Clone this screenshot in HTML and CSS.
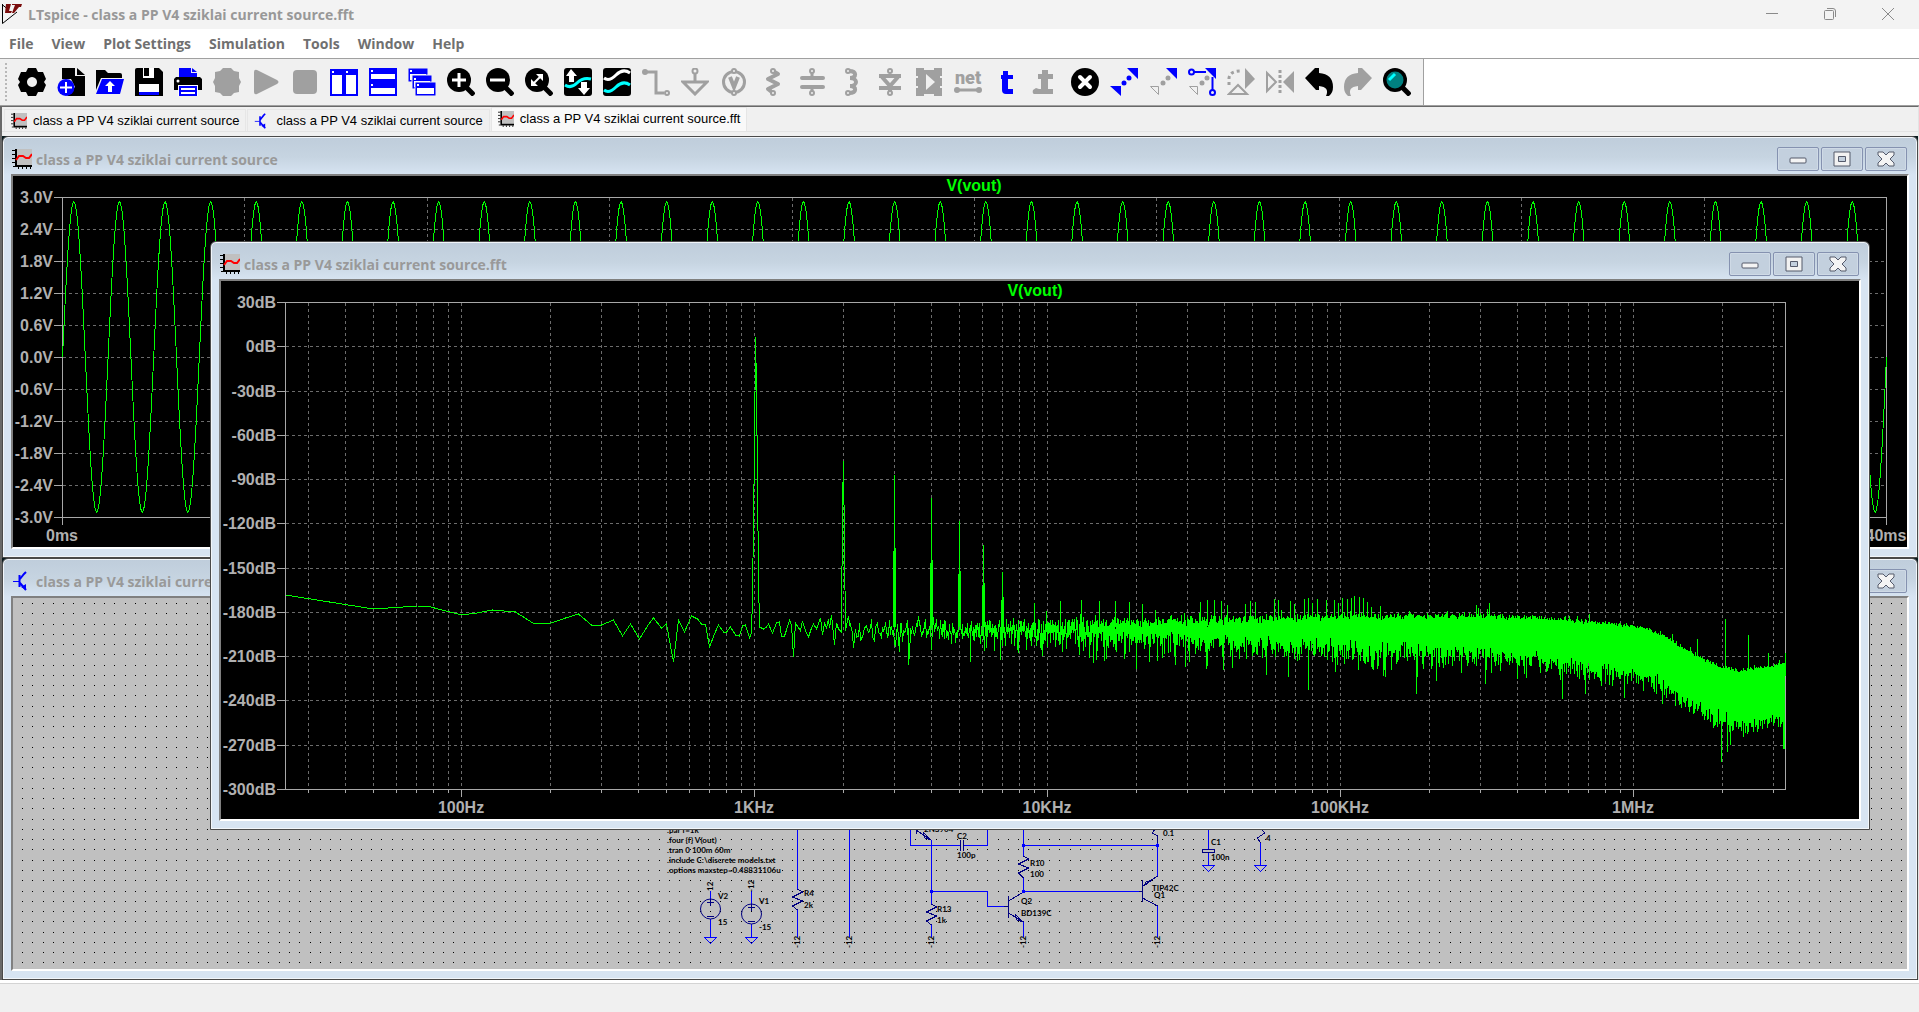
FILE: index.html
```html
<!DOCTYPE html>
<html lang="en">
<head>
<meta charset="utf-8">
<title>LTspice - class a PP V4 sziklai current source.fft</title>
<link rel="stylesheet" href="styles.css">
</head>
<body>
<svg class="defs" aria-hidden="true">
  <symbol id="plot-icon" viewBox="0 0 20 20"><path fill="#c0c0c0" d="M4 0h16v16H4z"/><path stroke="#000" stroke-width="2" fill="none" d="M4 0v17M3 17h17"/><path stroke="#000" fill="none" d="M0 1.500h3M0 5.500h3M0 9.500h3M0 13.500h3M6.500 18v2M10.500 18v2M14.500 18v2M18.500 18v2M1 17.500h2"/><path stroke="#f00" stroke-width="2" fill="none" d="M4 11l3-4h4l3 2h3l3-4"/></symbol>
  <symbol id="bjt-icon" viewBox="0 0 20 20"><path stroke="#00f" stroke-width="2" fill="none" d="M7.500 4v12M8 8l4-5 2-2M8 12l6 7"/><path stroke="#00f" fill="none" d="M1 10.500h6"/><path fill="#00f" d="M14 13v6l-5-3z"/></symbol>
  <symbol id="min-glyph" viewBox="0 0 18 16"><rect x="1" y="7" width="16" height="5" rx="1" fill="#f4f4f4" stroke="#555a6b"/></symbol>
  <symbol id="max-glyph" viewBox="0 0 18 16"><path fill="#f2f2f2" fill-rule="evenodd" stroke="#555a6b" d="M1 1h16v14H1zM5.500 5.500h7v5h-7z"/></symbol>
  <symbol id="close-glyph" viewBox="0 0 18 16"><path fill="#f4f4f4" stroke="#555a6b" stroke-linejoin="round" d="M1 1h5l3 3 3-3h5v3l-4 4 4 4v3h-5l-3-3-3 3H1v-3l4-4-4-4z"/></symbol>
</svg>

<header class="titlebar">
  <svg class="logo" viewBox="0 0 20 20"><path fill="none" stroke="#000" d="M.5 0v19.500L15 8M0 .5l5 4"/><path fill="#7a0c0c" d="M4 0h5L7 7h3L9 9H3zM10 0h10l-1 3h-2l-5 6h-2l3-8h-3z"/></svg>
  <h1 class="app-title">LTspice - class a PP V4 sziklai current source.fft</h1>
  <div class="sys-buttons">
    <button aria-label="Minimize"><svg viewBox="0 0 14 14"><path d="M1 6.500h12"/></svg></button>
    <button aria-label="Restore"><svg viewBox="0 0 14 14"><rect x="1.500" y="3.500" width="9" height="9" rx="1"/><path d="M4 1.500h6q2.500 0 2.500 2.500v6"/></svg></button>
    <button aria-label="Close"><svg viewBox="0 0 14 14"><path d="M1 1l12 12M13 1L1 13"/></svg></button>
  </div>
</header>

<nav class="menubar">
  <button>File</button><button>View</button><button>Plot Settings</button><button>Simulation</button><button>Tools</button><button>Window</button><button>Help</button>
</nav>

<div class="toolbar-row">
<div class="toolbar" role="toolbar" aria-label="Main">
  <span class="grip"></span>
  <button aria-label="Settings"><svg viewBox="0 0 28 28"><path fill-rule="evenodd" d="M10 0h8l2 4h5l3 7-2 3 2 3-3 7h-5l-2 4h-8l-2-4H3l-3-7 2-3-2-3 3-7h5zM14 9a5 5 0 1 0 .01 0z"/></svg></button>
  <button aria-label="New schematic"><svg viewBox="0 0 28 28"><path d="M5 0h13v8h10v20H10l8-9-4-8H5z"/><path d="M20 0l8 7h-8z"/><circle cx="9" cy="19.500" r="8.500" fill="#00f"/><path stroke="#fff" stroke-width="2" d="M3 19.500h12M9 14v11"/></svg></button>
  <button aria-label="Open"><svg viewBox="0 0 28 28"><path d="M0 2h9l3 3h12q2 0 2 2v3H5L0 22z"/><path fill="#00f" d="M6 11h22l-4 15H0z"/><path fill="#fff" d="M14 13l5 5h-3v6h-4v-6H9z"/></svg></button>
  <button aria-label="Save"><svg viewBox="0 0 28 28"><path d="M0 2q0-2 2-2h22l4 4v24H0z"/><path fill="#fff" d="M8 0h11v10H8zM4 16h20v8H4z"/><path d="M9 0h5v8H9z"/><path fill="#00f" d="M4 24h20v3H4z"/></svg></button>
  <button aria-label="Print"><svg viewBox="0 0 28 28"><path fill="#00f" d="M5 0h12v5h6v5H5zM18 0l5 4h-5z"/><path d="M2 9h24l2 2v11H0V11z"/><circle cx="4" cy="13" r="1.500" fill="#fff"/><path fill="#fff" d="M4 17h20v11H4z"/><path fill="#00f" d="M5 18h18v10H5z"/><path stroke="#fff" stroke-width="2" d="M7 21h14M7 25h14"/></svg></button>
  <button disabled aria-label="Halt"><svg viewBox="0 0 28 28"><path d="M10 0h8l3 3 5 1v6l2 4-2 4v6l-5 1-3 3h-8l-3-3-5-1v-6l-2-4 2-4V4l5-1z"/></svg></button>
  <button disabled aria-label="Run"><svg viewBox="0 0 28 28"><path d="M2 4q0-3 3-2l20 10q3 2 0 4L5 26q-3 1-3-2z"/></svg></button>
  <button disabled aria-label="Stop"><svg viewBox="0 0 28 28"><rect x="2" y="2" width="24" height="24" rx="4"/></svg></button>
  <button aria-label="Tile vertically"><svg viewBox="0 0 28 28"><path fill="#00f" d="M0 1h28v27H0z"/><path fill="#fff" d="M2 7h10v19H2zM16 7h10v19H16zM2 3h2v2H2zM16 3h2v2h-2z"/></svg></button>
  <button aria-label="Tile horizontally"><svg viewBox="0 0 28 28"><path fill="#00f" d="M0 0h28v28H0z"/><path fill="#fff" d="M2 6h24v5H2zM2 20h24v6H2zM2 2h2v2H2zM2 16h2v2H2z"/></svg></button>
  <button aria-label="Cascade"><svg viewBox="0 0 28 28"><path fill="#00f" stroke="#f0f0f0" d="M0 0h20v14H0z"/><path fill="#fff" d="M2 6h16v6H2zM2 2h2v2H2z"/><path fill="#00f" stroke="#f0f0f0" d="M4 7h20v14H4z"/><path fill="#fff" d="M6 13h16v6H6zM6 10h2v2H6z"/><path fill="#00f" stroke="#f0f0f0" d="M7 14h21v14H7z"/><path fill="#fff" d="M9 20h17v6H9zM9 16h2v2H9z"/></svg></button>
  <button aria-label="Zoom in"><svg viewBox="0 0 28 28"><circle cx="12" cy="12" r="12"/><path stroke="#000" stroke-width="5" d="M17 17l10 10"/><path stroke="#fff" stroke-width="3" d="M5 12h14M12 5v14"/></svg></button>
  <button aria-label="Zoom out"><svg viewBox="0 0 28 28"><circle cx="12" cy="12" r="12"/><path stroke="#000" stroke-width="5" d="M17 17l10 10"/><path stroke="#fff" stroke-width="3" d="M4 12h15"/></svg></button>
  <button aria-label="Zoom to fit"><svg viewBox="0 0 28 28"><circle cx="12" cy="12" r="12"/><path stroke="#000" stroke-width="5" d="M17 17l10 10"/><path stroke="#fff" stroke-width="2" d="M8 16l8-8"/><path fill="#fff" d="M11 6h7v7zM6 11v7h7z"/></svg></button>
  <button aria-label="Autorange"><svg viewBox="0 0 28 28"><rect width="28" height="28" rx="3"/><path fill="none" stroke="#0ff" stroke-width="3" d="M1 17q6 4 12-2t14-4"/><path fill="#fff" d="M7 1l6 7h-3v6H5V8H2zM20 27l-6-7h3v-6h6v6h3z"/></svg></button>
  <button aria-label="Plot panes"><svg viewBox="0 0 28 28"><rect width="28" height="28" rx="3"/><path fill="none" stroke="#fff" stroke-width="3" d="M1 10q5 4 12-3t14-2"/><path fill="none" stroke="#0ff" stroke-width="3" d="M1 22q5 4 12-3t14-2"/></svg></button>
  <button disabled aria-label="Wire"><svg viewBox="0 0 28 28"><circle cx="3" cy="4" r="3"/><path fill="none" stroke="#a0a0a0" stroke-width="3" d="M3 4h11v21h8"/><circle cx="25" cy="25" r="2" fill="none" stroke="#a0a0a0" stroke-width="2"/></svg></button>
  <button disabled aria-label="Ground"><svg viewBox="0 0 28 28"><circle cx="14" cy="3" r="2.500" fill="none" stroke="#a0a0a0" stroke-width="2"/><path fill="none" stroke="#a0a0a0" stroke-width="3" d="M14 5v9M2 14h24L14 26z"/></svg></button>
  <button disabled aria-label="Voltage"><svg viewBox="0 0 28 28"><circle cx="14" cy="14" r="10.500" fill="none" stroke="#a0a0a0" stroke-width="3"/><path fill="none" stroke="#a0a0a0" stroke-width="4" d="M10 9l4 10 4-10"/><circle cx="14" cy="3" r="2" fill="#f0f0f0" stroke="#a0a0a0" stroke-width="2"/><circle cx="14" cy="25" r="2" fill="#f0f0f0" stroke="#a0a0a0" stroke-width="2"/></svg></button>
  <button disabled aria-label="Resistor"><svg viewBox="0 0 28 28"><path fill="none" stroke="#a0a0a0" stroke-width="4" stroke-linejoin="round" d="M14 3l5 3-10 5 10 5-10 5 5 4"/><circle cx="14" cy="3" r="2" fill="#f0f0f0" stroke="#a0a0a0" stroke-width="2"/><circle cx="14" cy="25" r="2" fill="#f0f0f0" stroke="#a0a0a0" stroke-width="2"/></svg></button>
  <button disabled aria-label="Capacitor"><svg viewBox="0 0 28 28"><path stroke="#a0a0a0" stroke-width="4" stroke-linecap="round" d="M4 10h21M4 19h21"/><path stroke="#a0a0a0" stroke-width="3" d="M14 5v5M14 19v5"/><circle cx="14" cy="3" r="2" fill="#f0f0f0" stroke="#a0a0a0" stroke-width="2"/><circle cx="14" cy="25" r="2" fill="#f0f0f0" stroke="#a0a0a0" stroke-width="2"/></svg></button>
  <button disabled aria-label="Inductor"><svg viewBox="0 0 28 28"><path fill="none" stroke="#a0a0a0" stroke-width="4" d="M12 3c8 0 8 7 1 7 8 0 8 8 0 8 7 0 7 7-1 7"/><circle cx="11" cy="3" r="2" fill="#f0f0f0" stroke="#a0a0a0" stroke-width="2"/><circle cx="11" cy="25" r="2" fill="#f0f0f0" stroke="#a0a0a0" stroke-width="2"/></svg></button>
  <button disabled aria-label="Diode"><svg viewBox="0 0 28 28"><path fill="none" stroke="#a0a0a0" stroke-width="4" d="M3 8h22M6 9l8 9 8-9M3 20h22M14 20v4"/><circle cx="14" cy="3" r="2" fill="#f0f0f0" stroke="#a0a0a0" stroke-width="2"/><circle cx="14" cy="25" r="2" fill="#f0f0f0" stroke="#a0a0a0" stroke-width="2"/></svg></button>
  <button disabled aria-label="Component"><svg viewBox="0 0 28 28"><path fill-rule="evenodd" d="M1 0h8v2h10V0h8v8h-2v2h2v8h-2v2h2v8h-8v-2H9v2H1v-8h2v-2H1v-8h2V8H1zM11 6v16l9-8z"/></svg></button>
  <button disabled aria-label="Net name"><svg viewBox="0 0 28 28"><text class="net-glyph" x="14" y="16" text-anchor="middle">net</text><path stroke="#a0a0a0" stroke-width="3" d="M3 22h22"/><circle cx="3" cy="22" r="3"/><circle cx="25" cy="22" r="3"/></svg></button>
  <button aria-label="Text"><svg viewBox="0 0 28 28"><path fill="#00f" d="M10 3h5v4h5v4h-5v10h5v5h-7q-4 0-4-4V11H8V7h2z"/></svg></button>
  <button disabled aria-label="Directive"><svg viewBox="0 0 28 28"><path d="M10 2h6v4h5v5h-5v10h5v5H2q-2-1-1-4l3-2 3 1h2V11H6V6h4z"/></svg></button>
  <button aria-label="Delete"><svg viewBox="0 0 28 28"><circle cx="14" cy="14" r="14"/><path stroke="#fff" stroke-width="4" stroke-linecap="round" d="M9 9l10 10M19 9L9 19"/></svg></button>
  <button aria-label="Duplicate"><svg viewBox="0 0 28 28"><path fill="#00f" d="M17 0h11v11zM0 18h11v10z"/><circle cx="14" cy="15" r="2.500" fill="#00f"/><circle cx="19" cy="10" r="2.500" fill="#00f"/></svg></button>
  <button aria-label="Move"><svg viewBox="0 0 28 28"><path fill="#00f" d="M17 0h11v11z"/><path fill="none" stroke="#a0a0a0" d="M1.500 18.500h8v8z"/><circle cx="14" cy="15" r="2.500" fill="#a0a0a0"/><circle cx="19" cy="10" r="2.500" fill="#a0a0a0"/></svg></button>
  <button aria-label="Drag"><svg viewBox="0 0 28 28"><path fill="#00f" d="M17 0h11v11z"/><path fill="none" stroke="#a0a0a0" d="M1.500 18.500h8v8z"/><circle cx="14" cy="15" r="2.500" fill="#a0a0a0"/><circle cx="19" cy="10" r="2.500" fill="#a0a0a0"/><path fill="none" stroke="#00f" stroke-width="2" d="M6 4h12M24.500 9v13"/><circle cx="3.500" cy="4" r="2.500" fill="none" stroke="#00f" stroke-width="2"/><circle cx="24.500" cy="24.500" r="2.500" fill="none" stroke="#00f" stroke-width="2"/></svg></button>
  <button disabled aria-label="Rotate"><svg viewBox="0 0 28 28"><path d="M18 0l10 11-10 10z"/><path fill="none" stroke="#a0a0a0" stroke-width="2" d="M2 26h18L11 17z"/><path fill="none" stroke="#a0a0a0" stroke-width="3" stroke-dasharray="3 3" d="M2 17V10Q3 3 14 3"/></svg></button>
  <button disabled aria-label="Mirror"><svg viewBox="0 0 28 28"><path d="M28 3v22L17 14z"/><path fill="none" stroke="#a0a0a0" stroke-width="2" d="M1 5v18l9-9z"/><path stroke="#a0a0a0" stroke-width="3" stroke-dasharray="3 2" d="M14 2v24"/></svg></button>
  <button aria-label="Undo"><svg viewBox="0 0 28 28"><path d="M0 10L10 0h4v5q14 1 14 14 0 6-4 9h-3q4-9-7-10v4h-3z"/></svg></button>
  <button disabled aria-label="Redo"><svg viewBox="0 0 28 28"><path d="M28 10L18 0h-4v5Q0 6 0 19q0 6 4 9h3q-4-9 7-10v4h3z"/></svg></button>
  <button aria-label="Find"><svg viewBox="0 0 28 28"><circle cx="12" cy="12" r="12"/><path stroke="#000" stroke-width="5" d="M18 18l9 9"/><circle cx="12" cy="12" r="8.500" fill="#008080"/><path stroke="#0ff" stroke-width="3" d="M6 12l6-6"/></svg></button>
</div>
</div>

<main class="client">
  <div class="tabs" role="tablist">
    <button class="tab" role="tab"><svg><use href="#plot-icon"/></svg>class a PP V4 sziklai current source</button>
    <button class="tab" role="tab"><svg><use href="#bjt-icon"/></svg>class a PP V4 sziklai current source</button>
    <button class="tab active" role="tab" aria-selected="true"><svg><use href="#plot-icon"/></svg>class a PP V4 sziklai current source.fft</button>
  </div>

  <div class="desktop">
    <section class="window win-wave">
      <div class="caption">
        <svg class="cap-icon"><use href="#plot-icon"/></svg><h2>class a PP V4 sziklai current source</h2>
        <div class="controls"><button aria-label="Minimize"><svg><use href="#min-glyph"/></svg></button><button aria-label="Maximize"><svg><use href="#max-glyph"/></svg></button><button aria-label="Close"><svg><use href="#close-glyph"/></svg></button></div>
      </div>
      <div class="pane"><svg class="plot" id="wave"></svg></div>
    </section>

    <section class="window win-schematic">
      <div class="caption">
        <svg class="cap-icon"><use href="#bjt-icon"/></svg><h2>class a PP V4 sziklai current source</h2>
        <div class="controls"><button aria-label="Minimize"><svg><use href="#min-glyph"/></svg></button><button aria-label="Maximize"><svg><use href="#max-glyph"/></svg></button><button aria-label="Close"><svg><use href="#close-glyph"/></svg></button></div>
      </div>
      <div class="pane sheet"><svg class="plot">
        <path id="dots" fill="#000"/>
        <g transform="translate(642 227)">
          <path class="wire" d="M142.500 0V64M142.500 85V112M194.500 0V112M255.500 0V20.500H305M309 20.500H332.500V0M276.500 15V79M276.500 100V112M276.500 66.500H332.500V81.500H349M368.500 0V31M368.500 53V66.500M368.500 97V112M368.500 20.500H502.500M368.500 66.500H484M502.500 17V51M502.500 81V112M553.500 0V24M553.500 28V40M605.500 18V40M55.500 66V74M96.500 66V79M55.500 94V112M96.500 99V112"/>
          <path class="wire" d="M49.500 112.500h12l-6 6zM90.500 112.500h12l-6 6zM547.500 40.500h12l-6 6zM599.500 40.500h12l-6 6z"/>
          <path class="part" d="M142.500 64l5 3-10 5 10 4-10 5 5 4M276.500 79l5 3-10 5 10 4-10 5 5 4M368.500 31l5 3-10 5 10 4-10 5 5 5M605.500 -6l5 3-5 5 4 6-7 5 3 5M502.500 0l-5 8 5 3v7M305.500 15v11M308.500 15v11M547.500 24.500h12v3h-12zM261.500 0v9M261 5l15 10M353.500 71v22M349 81.500h4M353.500 76l15-9M353.500 88l15 9M487.500 55v22M484 66.500h3M487.500 61l15-10M487.500 73l15 8"/>
          <circle class="part" cx="55.500" cy="84" r="10"/><circle class="part" cx="96.500" cy="89" r="10"/>
          <path class="part" d="M52 77.500h7M55.500 74v7M52 91.500h7M93 82.500h7M96.500 79v7M93 96.500h7M268 7l8 8-6-2zM360 89l8 8-6-2zM489 61l8-6-6 2z"/>
          <path fill="#00f" d="M275 65h3v3h-3zM367 19h3v3h-3zM367 65h3v3h-3zM501 19h3v3h-3z"/>
          <g class="net-text">
            <text x="12" y="8">.par f=1k</text><text x="12" y="18">.four {f} V(out)</text><text x="12" y="28">.tran 0 100m 60m</text><text x="12" y="38">.include C:\discrete models.txt</text><text x="12" y="48">.options maxstep=0.48831106u</text>
            <text x="63" y="74">V2</text><text x="63" y="100">15</text><text x="104" y="79">V1</text><text x="104" y="105">-15</text><text x="149" y="71">R4</text><text x="149" y="83">2k</text>
            <text x="269" y="7">2N3904</text><text x="302" y="14">C2</text><text x="302" y="33">100p</text><text x="282" y="87">R13</text><text x="282" y="98">1k</text><text x="375" y="41">R10</text><text x="375" y="52">100</text><text x="366" y="79">Q2</text><text x="366" y="91">BD139C</text>
            <text x="497" y="66">TIP42C</text><text x="499" y="73">Q1</text><text x="508" y="11">0.1</text><text x="556" y="20">C1</text><text x="556" y="35">100n</text><text x="611" y="16">4</text>
            <text transform="translate(58 66) rotate(-90)">12</text><text transform="translate(99 67) rotate(-90)">-12</text><text transform="translate(145 123) rotate(-90)">-12</text><text transform="translate(197 123) rotate(-90)">-12</text><text transform="translate(279 123) rotate(-90)">-12</text><text transform="translate(371 123) rotate(-90)">-12</text><text transform="translate(505 123) rotate(-90)">-12</text>
          </g>
        </g>
      </svg></div>
    </section>

    <section class="window win-fft">
      <div class="caption">
        <svg class="cap-icon"><use href="#plot-icon"/></svg><h2>class a PP V4 sziklai current source.fft</h2>
        <div class="controls"><button aria-label="Minimize"><svg><use href="#min-glyph"/></svg></button><button aria-label="Maximize"><svg><use href="#max-glyph"/></svg></button><button aria-label="Close"><svg><use href="#close-glyph"/></svg></button></div>
      </div>
      <div class="pane"><svg class="plot" id="fft"></svg></div>
    </section>
  </div>
</main>
<footer class="statusbar"></footer>
<script src="plots.js"></script>
</body>
</html>
```
FILE: styles.css
```css
* { box-sizing: border-box; }
body { margin: 0; height: 100vh; display: flex; flex-direction: column; background: #f0f0f0; overflow: hidden; font-family: "Open Sans", "Noto Sans", sans-serif; }
button { font: inherit; border: 0; padding: 0; background: none; color: inherit; }
h1, h2 { margin: 0; font-weight: 700; white-space: nowrap; }
.defs { position: absolute; width: 0; height: 0; }

.titlebar { flex: none; height: 29px; display: flex; align-items: center; background: #f3f3f3; padding: 0 2px 1px; gap: 6px; }
.logo { width: 20px; height: 20px; }
.app-title { flex: 1; font-size: 14px; color: #989898; }
.sys-buttons { display: flex; height: 100%; }
.sys-buttons button { width: 58px; display: grid; place-items: center; }
.sys-buttons svg { width: 14px; height: 14px; fill: none; stroke: #8a8a8a; }

.menubar { flex: none; height: 30px; display: flex; align-items: center; gap: 18px; padding: 0 9px; background: #fff; border-bottom: 1px solid #a0a0a0; color: #707070; font-size: 14px; font-weight: 700; }

.toolbar-row { flex: none; height: 47px; display: flex; background: #fff; border-bottom: 1px solid #a0a0a0; }
.toolbar { display: flex; align-items: center; gap: 11px; padding: 0 12px 0 5px; background: #f0f0f0; border-right: 1px solid #a0a0a0; }
.toolbar button, .toolbar button svg { display: block; width: 28px; height: 28px; }
.toolbar button:disabled { fill: #a0a0a0; }
.grip { width: 2px; height: 38px; background: repeating-linear-gradient(#b8b8b8 0 2px, #f0f0f0 2px 4px); }
.net-glyph { font: 900 18px Roboto, sans-serif; }

.client { flex: 1; min-height: 0; display: flex; flex-direction: column; border: 1px solid #696969; border-width: 1px 1px 0 2px; border-right-color: #e3e3e3; }
.tabs { flex: none; height: 29px; display: flex; padding: 0 2px 5px; background: linear-gradient(#e3e3e3, #e3e3e3) 0 24px / 100% 1px no-repeat; }
.tab { display: flex; align-items: center; gap: 6px; padding: 0 6px; margin: 2px 1px 0 0; border: 1px solid #e6e6e6; border-width: 1px 1px 0; font: 13px "Liberation Sans", Arial, sans-serif; color: #000; }
.tab svg { width: 16px; height: 16px; }
.tab.active { margin-top: 0; padding-bottom: 2px; background: #f9f9f9; }

.desktop { flex: 1; min-height: 0; position: relative; background: #0b1c1f; }
.window { position: absolute; display: flex; flex-direction: column; padding: 0 8px 8px; border: 1px solid #4a4a4a; border-radius: 6px 6px 0 0; box-shadow: inset 0 0 0 1px #f2f6fa; background: linear-gradient(#bfcddb, #c6d4e1 20px, #d7e4f2 38px); }
.win-wave { inset: 0 0 50% 0; }
.win-schematic { inset: 50% 0 0 0; }
.win-fft { inset: 105px 48px 150px 208px; }
.caption { flex: none; height: 37px; display: flex; align-items: center; padding: 7px 2px 0 1px; gap: 4px; }
.cap-icon { flex: none; width: 20px; height: 20px; }
.caption h2 { flex: 1; font-size: 14px; color: #999; }
.controls { display: flex; gap: 2px; }
.controls button { width: 42px; height: 24px; display: grid; place-items: center; border: 1px solid #8592b0; border-radius: 2px; box-shadow: inset 0 0 0 1px #cfdae6; background: #c3d0de; }
.controls svg { width: 18px; height: 16px; }
.pane { flex: 1; min-height: 0; border: 2px solid #fff; border-top-color: #808080; border-left-color: #808080; background: #000; overflow: hidden; }
.sheet { background: #c0c0c0; }
.plot { display: block; width: 100%; height: 100%; }
.plot path { shape-rendering: crispEdges; }
.axis { fill: none; stroke: #a8a8a8; }
.grid { fill: none; stroke: #6c6c6c; stroke-dasharray: 3 3; }
.trace { fill: none; stroke: #0f0; }
.label { fill: #b0b0b0; font: bold 16px "Liberation Sans", Arial, sans-serif; }
.legend { fill: #0f0; }
.wire { fill: none; stroke: #00f; }
.part { fill: none; stroke: #000080; }
.net-text { fill: #000; font: bold 8px Lato, sans-serif; }

.statusbar { flex: none; height: 32px; border-top: 3px solid #fff; box-shadow: inset 0 1px #d4d4d4; }
```
FILE: plots.js
```js
// Draws the waveform pane, the FFT pane and the schematic grid to the size of their windows.
const NS = 'http://www.w3.org/2000/svg';
function add(svg, tag, attrs, text) {
  const el = document.createElementNS(NS, tag);
  for (const k in attrs) el.setAttribute(k, attrs[k]);
  if (text) el.textContent = text;
  svg.appendChild(el);
}
const px = v => Math.round(v) + 0.5;

function frame(svg, box, rows, rowLabel, cols) {
  const { l, t, r, b } = box;
  let grid = '', axis = `M${px(l)} ${px(t)}H${px(r)}V${px(b)}H${px(l)}Z`;
  for (let i = 0; i <= rows; i++) {
    const y = t + (b - t) * i / rows;
    if (i && i < rows) grid += `M${px(l)} ${px(y)}H${px(r)}`;
    axis += `M${l - 8} ${px(y)}H${l}`;
    add(svg, 'text', { class: 'label', x: l - 9, y: Math.round(y) + 6, 'text-anchor': 'end' }, rowLabel(i));
  }
  for (const c of cols) {
    if (c.x > l && c.x < r - 1) grid += `M${px(c.x)} ${px(t)}V${b}`;
    if (c.tick) axis += `M${px(c.x)} ${b}v${c.tick}`;
    if (c.text) add(svg, 'text', { class: 'label', x: Math.round(c.x), y: b + 24, 'text-anchor': 'middle' }, c.text);
  }
  add(svg, 'path', { class: 'grid', d: grid });
  add(svg, 'path', { class: 'axis', d: axis });
  add(svg, 'text', { class: 'label legend', x: Math.round((l + r) / 2), y: t - 6, 'text-anchor': 'middle' }, 'V(vout)');
}

function drawWave() {
  const svg = document.getElementById('wave');
  svg.replaceChildren();
  const box = { l: 49, t: 21, r: svg.clientWidth - 21, b: svg.clientHeight - 30 };
  const w = box.r - box.l, h = box.b - box.t, cols = [];
  for (let i = 0; i <= 10; i++) cols.push({ x: box.l + w * i / 10, tick: 8, text: i * 4 + 'ms' });
  frame(svg, box, 10, i => (3 - 0.6 * i).toFixed(1).replace('-0.0', '0.0') + 'V', cols);
  let d = '';
  for (let i = 0; i <= w; i++) {
    const v = 2.91 * Math.sin(2 * Math.PI * 40 * i / w);
    d += (i ? 'L' : 'M') + (box.l + i + 0.5) + ' ' + (box.t + h * (3 - v) / 6).toFixed(1);
  }
  add(svg, 'path', { class: 'trace', d });
}

// Low bins, [x, y] in units of a 1500 x 487 plot area
const LOW = [[0,293],[88,307],[132,304],[142,304],[149,306],[176,313],[192,311],[207,308],[230,310],[249,322],[266,321],[280,316],[293,312],[306,323],[316,323],[328,318],[337,334],[345,322],[354,337],[362,324],[368,316],[376,326],[381,322],[388,360],[393,318],[399,330],[406,314],[412,317],[416,322],[420,322],[424,345],[429,332],[433,323],[438,330],[441,330],[445,325],[450,333],[454,334],[457,324],[460,323],[464,336],[466,331],[467,294],[468,220],[469,146],[470,35],[471,84],[472,180],[473,276],[474,325],[478,327],[481,325],[483,322],[487,331],[491,321],[494,320],[496,334],[499,334],[501,328],[504,318],[506,323],[508,355],[510,321],[515,329],[517,319],[520,329],[523,335],[526,326],[528,322],[531,327],[535,316],[537,333],[539,321],[541,326],[543,317],[544,326],[546,313],[549,343],[551,321],[553,327],[556,330],[557,202],[558,159],[559,245],[560,329],[563,314]];
// Level of the noise floor: [x, y] of the RMS value
const FLOOR = [[560,326],[764,325],[1056,323],[1200,324],[1250,326],[1315,332],[1349,335],[1375,343],[1395,356],[1415,367],[1437,378],[1455,381],[1475,378],[1500,374]];
// Tones that rise over the floor and nulls that fall under it
const SPIKES = [[609,173],[646,196],[674,219],[698,243],[717,270],[749,301],[775,299],[796,298],[814,299],[830,299],[844,300],[857,302],[870,308],[915,300],[922,298],[929,298],[936,299],[942,303],[960,302],[965,299],[970,300],[989,297],[993,298],[1005,299],[1009,302],[1019,297],[1023,296],[1027,301],[1032,297],[1041,298],[1049,298],[1053,301],[1057,296],[1062,297],[1066,296],[1069,294],[1074,295],[1078,296],[1082,300],[1086,305],[1095,304],[1162,309],[1191,303],[1193,306],[1204,301],[1202,307],[1304,312],[1387,332],[1412,337],[1440,317],[1463,333],[1483,351],[1500,351]];
const NULLS = [[623,363],[685,360],[808,361],[811,358],[821,357],[839,357],[851,367],[890,363],[900,365],[921,367],[938,368],[981,367],[1003,375],[1023,388],[1050,370],[1100,375],[1131,392],[1151,379],[1200,382],[1277,397],[1300,392],[1339,396],[1377,402],[1390,404],[1436,460],[1442,450],[1445,443],[1458,435],[1498,447],[1499,447]];

function drawFft() {
  const svg = document.getElementById('fft');
  svg.replaceChildren();
  const box = { l: 64, t: 21, r: svg.clientWidth - 74, b: svg.clientHeight - 30 };
  const w = box.r - box.l, h = box.b - box.t, kx = w / 1500, ky = h / 487;
  const range = Math.log10(3.29e6 / 25), cols = [];
  const names = { 100: '100Hz', 1000: '1KHz', 10000: '10KHz', 100000: '100KHz', 1000000: '1MHz' };
  for (let dec = 10; dec <= 1e6; dec *= 10)
    for (let m = 1; m < 10; m++) {
      const f = dec * m, x = box.l + w * Math.log10(f / 25) / range;
      if (f > 25 && x < box.r) cols.push({ x, tick: names[f] ? 8 : 4, text: names[f] });
    }
  frame(svg, box, 11, i => 30 - 30 * i + 'dB', cols);

  let seed = 20231;
  const rand = () => ((seed = (seed * 16807) % 2147483647) / 2147483647);
  const floorAt = x => {
    let i = 1;
    while (i < FLOOR.length - 1 && FLOOR[i][0] < x) i++;
    const [x0, y0] = FLOOR[i - 1], [x1, y1] = FLOOR[i];
    return y0 + (y1 - y0) * (x - x0) / (x1 - x0);
  };
  let d = LOW.map(([x, y], i) => (i ? 'L' : 'M') + (box.l + x * kx + 0.5).toFixed(1) + ' ' + (box.t + y * ky).toFixed(1)).join('');
  // One 25 Hz bin at a time, gathered into a low and a high value for each pixel column
  let col = -1, lo, hi;
  for (let f = 2100; f <= 3.29e6; f += 25) {
    const x = 1500 * Math.log10(f / 25) / range, c = Math.round(x);
    const y = floorAt(x) - 14.76 * Math.log10(-Math.log(rand()) + 0.0003);
    if (c !== col) {
      if (col > 0) d += `L${px(box.l + col * kx)} ${(box.t + hi * ky).toFixed(1)}V${(box.t + lo * ky + 1).toFixed(1)}`;
      col = c; lo = hi = y;
    }
    lo = Math.max(lo, y); hi = Math.min(hi, y);
  }
  for (const [x, y] of SPIKES) d += `M${px(box.l + x * kx)} ${Math.round(box.t + y * ky)}V${Math.round(box.t + floorAt(x) * ky)}`;
  for (const [x, y] of SPIKES.slice(0, 5)) {
    const foot = y + (325 - y) * 0.5;
    d += `M${px(box.l + x * kx - 1)} ${box.t + foot * ky}V${box.t + 325 * ky}M${px(box.l + x * kx + 1)} ${box.t + (foot - 3) * ky}V${box.t + 325 * ky}`;
  }
  for (const [x, y] of NULLS) d += `M${px(box.l + x * kx)} ${Math.round(box.t + y * ky)}V${Math.round(box.t + floorAt(x) * ky)}`;
  add(svg, 'path', { class: 'trace', d });
}

function drawDots() {
  const dots = document.getElementById('dots'), { clientWidth: w, clientHeight: h } = dots.ownerSVGElement;
  let d = '';
  for (let j = 0; 5 + j * 10.27 < h; j++)
    for (let i = 0; 9 + i * 10.27 < w; i++)
      d += `M${Math.round(9 + i * 10.27)} ${Math.round(5 + j * 10.27)}h1v1h-1z`;
  dots.setAttribute('d', d);
}

function drawAll() { drawWave(); drawFft(); drawDots(); }
drawAll();
addEventListener('resize', drawAll);
```
